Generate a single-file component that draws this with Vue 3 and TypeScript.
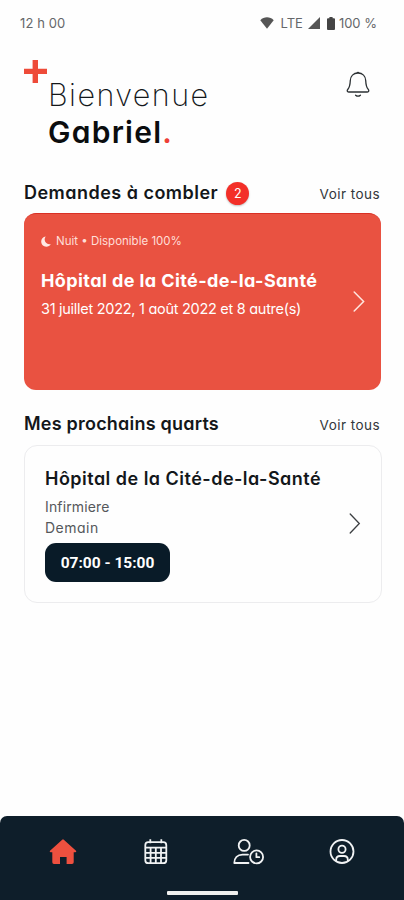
<script setup lang="ts">
interface Offer {
  shift: string
  availability: string
  place: string
  dates: string
}

interface Shift {
  place: string
  role: string
  day: string
  hours: string
}

const userName: string = 'Gabriel'
const requestCount: number = 2

const offer: Offer = {
  shift: 'Nuit',
  availability: 'Disponible 100%',
  place: 'Hôpital de la Cité-de-la-Santé',
  dates: '31 juillet 2022, 1 août 2022 et 8 autre(s)',
}

const nextShift: Shift = {
  place: 'Hôpital de la Cité-de-la-Santé',
  role: 'Infirmiere',
  day: 'Demain',
  hours: '07:00 - 15:00',
}
</script>

<template>
  <div class="screen">
    <header class="status">
      <span class="clock">12 h 00</span>
      <div class="indicators">
        <svg class="wifi" width="14" height="12" viewBox="0 0 14 12">
          <path d="M0.3 3.2C4-.6 10-.6 13.7 3.2L7 11.7Z" fill="#555" />
        </svg>
        <span class="lte">LTE</span>
        <svg class="signal" width="12" height="12" viewBox="0 0 12 12">
          <path d="M12 0V12H0Z" fill="#555" />
        </svg>
        <svg class="battery" width="8" height="13" viewBox="0 0 8 13">
          <path d="M2.400 0h3.200v1.300H7q1 0 1 1V12q0 1-1 1H1q-1 0-1-1V2.300q0-1 1-1h1.400z" fill="#444" />
        </svg>
        <span class="percent">100 %</span>
      </div>
    </header>

    <section class="greeting">
      <svg class="plus" width="23" height="23" viewBox="0 0 23 23">
        <path d="M8.600 0h5.400v8.700H23v5.300h-9V23H8.600v-9H0V8.700h8.600z" fill="#ee4b39" />
      </svg>
      <h1 class="hello">
        <span class="welcome">Bienvenue</span>
        <span class="name">{{ userName }}<span class="dot">.</span></span>
      </h1>
      <svg class="bell" width="24" height="27" viewBox="0 0 24 27" fill="none" stroke="#2b3033" stroke-width="1.300" stroke-linecap="round" stroke-linejoin="round">
        <path d="M10.500 2.200q1.500-1.500 3 0M12 2C7.400 2 4.500 5.200 4.300 9.500C4.100 14 4 15.800 1.900 18.200C.7 19.600 1.100 21 2.700 21H21.300C22.900 21 23.300 19.600 22.100 18.200C20 15.800 19.900 14 19.700 9.500C19.500 5.200 16.600 2 12 2Z" />
        <path d="M9.600 24.200q2.400 2 4.800 0" />
      </svg>
    </section>

    <div class="heading first">
      <h2 class="demandes">Demandes à combler</h2>
      <span class="count">{{ requestCount }}</span>
      <a class="all">Voir tous</a>
    </div>

    <article class="offer">
      <div class="offer-body">
        <p class="tag">
          <svg class="moon" width="10" height="11" viewBox="0 0 10 11">
            <path d="M4.800.4C1.900.8.200 3 .200 5.600C.200 8.600 2.400 10.700 5.300 10.700C7.300 10.700 8.900 9.800 9.800 8.200C6.600 8.700 4 6.700 3.700 4C3.600 2.600 4 1.300 4.800.4Z" fill="#ffe9e4" />
          </svg>
          <span class="tag-text">{{ offer.shift }} • {{ offer.availability }}</span>
        </p>
        <h3 class="place bold">{{ offer.place }}</h3>
        <p class="dates">{{ offer.dates }}</p>
      </div>
      <svg class="chevron" width="12" height="21" viewBox="0 0 12 21" fill="none" stroke="#ffe6df" stroke-width="1.500" stroke-linecap="round">
        <path d="M1.200 1L10.600 10.500L1.200 20" />
      </svg>
    </article>

    <div class="heading second">
      <h2 class="quarts">Mes prochains quarts</h2>
      <a class="all">Voir tous</a>
    </div>

    <article class="shift">
      <div class="shift-body">
        <h3 class="place">{{ nextShift.place }}</h3>
        <p class="line role">{{ nextShift.role }}</p>
        <p class="line day">{{ nextShift.day }}</p>
        <span class="hours">{{ nextShift.hours }}</span>
      </div>
      <svg class="chevron" width="12" height="21" viewBox="0 0 12 21" fill="none" stroke="#3c3f42" stroke-width="1.300" stroke-linecap="round">
        <path d="M1.200 1L10.300 10.500L1.200 20" />
      </svg>
    </article>

    <nav class="tabs">
      <div class="tab-row">
        <svg width="28" height="28" viewBox="0 0 28 28">
          <path d="M13.200 1.700q.8-.7 1.600 0L27 12.700q.9 1.300-.6 1.600H24.700V24.300q0 1.700-1.700 1.700H17.600V18.900H11V26H5q-1.700 0-1.700-1.700V14.300H1.600q-1.500-.3-.6-1.600Z" fill="#ee503f" />
        </svg>
        <svg width="28" height="28" viewBox="0 0 28 28" fill="none" stroke="#f1f3f4" stroke-width="1.800">
          <rect x="4.300" y="4.200" width="21" height="21" rx="3" />
          <path d="M9.300 1.300v4M20.300 1.300v4M4.300 9.600h21M4.300 14.800h21M4.300 19.900h21M9.600 9.600v15.600M14.800 9.600v15.600M20 9.600v15.600" />
        </svg>
        <svg width="32" height="28" viewBox="0 0 32 28" fill="none" stroke="#f1f3f4" stroke-width="1.800" stroke-linecap="round" stroke-linejoin="round">
          <circle cx="12.200" cy="7.400" r="5.500" />
          <path d="M16.500 25H2.300C2.300 20 5.500 16.600 10.500 16.600H16" />
          <circle cx="24.600" cy="18.900" r="6.500" />
          <path d="M24.400 15.300v3.900h2.800" />
        </svg>
        <svg width="28" height="28" viewBox="0 0 28 28" fill="none" stroke="#f1f3f4" stroke-width="1.800">
          <circle cx="14" cy="13.500" r="11.500" />
          <circle cx="14" cy="11.200" r="3.600" />
          <path d="M8.200 23.100V21.700Q8.200 18 12 18H16Q19.800 18 19.800 21.700V23.100" />
        </svg>
      </div>
      <div class="home-bar"></div>
    </nav>
  </div>
</template>

<style>
body {
  margin: 0;
  background: #fff;
}
</style>

<style scoped>
.screen {
  width: 404px;
  height: 900px;
  display: flex;
  flex-direction: column;
  background: #fefefe;
  color: #13171a;
  font-family: Inter, "Open Sans", sans-serif;
  font-feature-settings: "cv11";
  overflow: hidden;
  white-space: nowrap;
}
h1, h2, h3, p {
  margin: 0;
}
svg {
  display: block;
  flex: none;
}
.status {
  height: 46px;
  flex: none;
  display: flex;
  align-items: center;
  justify-content: space-between;
  padding: 0 27px 0 20px;
  box-sizing: border-box;
  font-size: 13px;
  color: #65676a;
}
.clock {
  letter-spacing: 0.1px;
}
.indicators {
  display: flex;
  align-items: center;
}
.lte {
  margin-left: 7px;
}
.signal {
  margin-left: 5px;
}
.battery {
  margin-left: 7px;
}
.percent {
  margin-left: 4px;
}
.greeting {
  height: 130px;
  flex: none;
  display: flex;
  align-items: flex-start;
  padding: 0 34px 0 24px;
}
.plus {
  margin-top: 14px;
}
.hello {
  flex: 1;
  margin-top: 30px;
  padding-left: 1px;
  font-size: 30.5px;
  line-height: 38px;
  font-weight: 200;
}
.welcome {
  display: block;
  letter-spacing: 1.450px;
}
.name {
  display: block;
  font-size: 30px;
  line-height: 37px;
  font-weight: 600;
  letter-spacing: 1.250px;
  color: #0b0d0f;
}
.dot {
  color: #ee3f36;
}
.bell {
  margin-top: 25px;
}
.heading {
  flex: none;
  display: flex;
  align-items: center;
  padding: 0 24px;
}
.first {
  height: 34px;
  margin-bottom: 3px;
}
.second {
  height: 34px;
  margin: 17px 0 4px;
}
.heading h2 {
  font-size: 18px;
  line-height: 24px;
  font-weight: 600;
}
.heading .demandes {
  letter-spacing: 0.480px;
}
.heading .quarts {
  letter-spacing: 0.220px;
}
.count {
  width: 23px;
  height: 23px;
  margin-left: 8px;
  border-radius: 50%;
  background: #f32f28;
  box-shadow: 0 1px 2px rgba(0, 0, 0, 0.25);
  color: #fff;
  font-size: 12.5px;
  line-height: 23px;
  text-align: center;
}
.all {
  margin-left: auto;
  padding-top: 2px;
  font-size: 13.5px;
  letter-spacing: 0.450px;
  color: #33373a;
}
.offer {
  flex: none;
  height: 177px;
  margin: 0 23px 0 24px;
  padding: 0 16px 2px 17px;
  box-sizing: border-box;
  border-radius: 12px;
  background: #e95241;
  border-top: 1px solid #d93024;
  color: #fff;
  display: flex;
  align-items: center;
  justify-content: space-between;
}
.offer-body {
  align-self: flex-start;
  padding-top: 17px;
}
.tag {
  display: flex;
  align-items: center;
  height: 20px;
  font-size: 11.5px;
  color: #ffdfd8;
}
.tag-text {
  margin-left: 5px;
}
.place {
  font-size: 18px;
  line-height: 24px;
  font-weight: 600;
  letter-spacing: 0.480px;
}
.bold {
  margin-top: 18px;
  font-weight: 700;
  letter-spacing: 0.410px;
}
.dates {
  margin-top: 4px;
  font-size: 14.5px;
  line-height: 24px;
  letter-spacing: -0.280px;
}
.shift {
  flex: none;
  height: 158px;
  margin: 0 22px 0 24px;
  padding: 0 20px 1px 20px;
  box-sizing: border-box;
  border: 1px solid #ececee;
  border-radius: 13px;
  display: flex;
  align-items: center;
  justify-content: space-between;
}
.shift-body {
  align-self: flex-start;
  padding-top: 21px;
}
.line {
  font-size: 14px;
  line-height: 21px;
  letter-spacing: 0.150px;
  color: #55585b;
}
.day {
  letter-spacing: 0.5px;
}
.role {
  margin-top: 5px;
}
.hours {
  display: block;
  width: 125px;
  height: 39px;
  margin-top: 5px;
  border-radius: 11px;
  background: #091b28;
  color: #fff;
  font: 700 15.5px/40px Roboto, sans-serif;
  text-align: center;
}
.tabs {
  height: 84px;
  flex: none;
  margin-top: auto;
  border-radius: 7px 7px 0 0;
  background: #0e1e2a;
  display: flex;
  flex-direction: column;
  align-items: center;
}
.tab-row {
  width: 100%;
  height: 75px;
  padding: 0 48px 3px 49px;
  box-sizing: border-box;
  display: flex;
  align-items: center;
  justify-content: space-between;
}
.home-bar {
  width: 71px;
  height: 4px;
  border-radius: 1px;
  background: #f0f0ee;
}
</style>
